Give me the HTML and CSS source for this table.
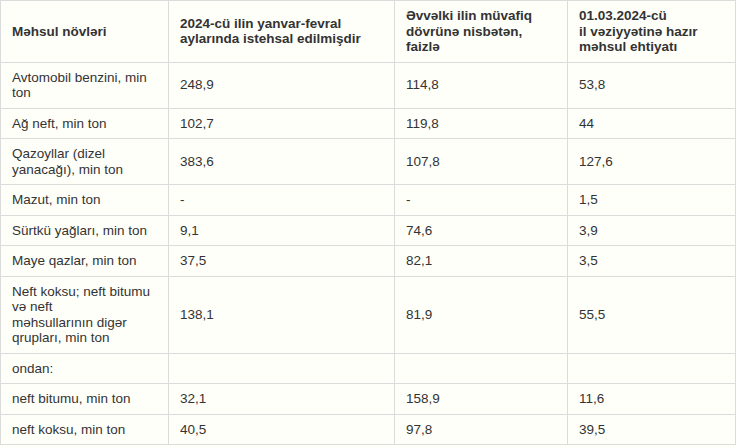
FILE: index.html
```html
<!DOCTYPE html>
<html lang="az">
<head>
<meta charset="utf-8">
<title>Məhsul növləri</title>
<link rel="stylesheet" href="styles.css">
</head>
<body>
<table class="data">
  <colgroup>
    <col class="c1"><col class="c2"><col class="c3"><col class="c4">
  </colgroup>
  <thead>
    <tr>
      <th>Məhsul növləri</th>
      <th>2024-cü ilin yanvar-fevral aylarında istehsal edilmişdir</th>
      <th>Əvvəlki ilin müvafiq dövrünə nisbətən, faizlə</th>
      <th>01.03.2024-cü<br>il vəziyyətinə hazır məhsul ehtiyatı</th>
    </tr>
  </thead>
  <tbody>
    <tr><td>Avtomobil benzini, min ton</td><td>248,9</td><td>114,8</td><td>53,8</td></tr>
    <tr><td>Ağ neft, min ton</td><td>102,7</td><td>119,8</td><td>44</td></tr>
    <tr><td>Qazoyllar (dizel yanacağı), min ton</td><td>383,6</td><td>107,8</td><td>127,6</td></tr>
    <tr><td>Mazut, min ton</td><td>-</td><td>-</td><td>1,5</td></tr>
    <tr><td>Sürtkü yağları, min ton</td><td>9,1</td><td>74,6</td><td>3,9</td></tr>
    <tr><td>Maye qazlar, min ton</td><td>37,5</td><td>82,1</td><td>3,5</td></tr>
    <tr><td>Neft koksu; neft bitumu və neft<br>məhsullarının digər qrupları, min ton</td><td>138,1</td><td>81,9</td><td>55,5</td></tr>
    <tr><td>ondan:</td><td></td><td></td><td></td></tr>
    <tr><td>neft bitumu, min ton</td><td>32,1</td><td>158,9</td><td>11,6</td></tr>
    <tr><td>neft koksu, min ton</td><td>40,5</td><td>97,8</td><td>39,5</td></tr>
  </tbody>
</table>
</body>
</html>
```

FILE: styles.css
```css
html, body {
  margin: 0;
  padding: 0;
  background: #fffffa;
}

.data {
  border-collapse: collapse;
  table-layout: fixed;
  width: 735px;
  font-family: "Liberation Sans", Arial, sans-serif;
  font-size: 13.5px;
  line-height: 15.5px;
  color: #333;
}

.c1 { width: 168px; }
.c2 { width: 226px; }
.c3 { width: 173px; }
.c4 { width: 168px; }

.data th,
.data td {
  border: 1px solid #dcdcdc;
  padding: 7px 10px 7px 11px;
  text-align: left;
  vertical-align: middle;
}

.data th {
  font-weight: bold;
}
```
